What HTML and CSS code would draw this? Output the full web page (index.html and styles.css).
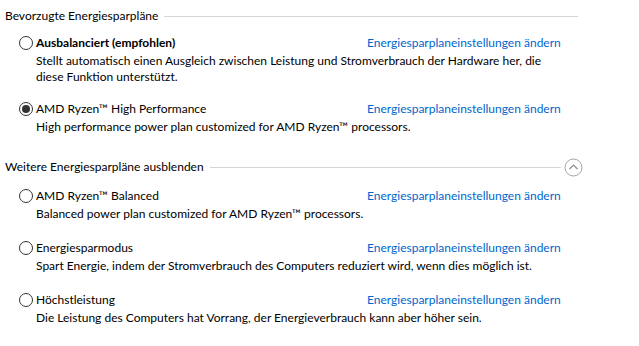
FILE: index.html
```html
<!DOCTYPE html>
<html lang="de">
<head>
<meta charset="utf-8">
<title>Energieoptionen</title>
<link rel="stylesheet" href="styles.css">
</head>
<body>
<div class="page">
  <section class="group">
    <div class="group-head">
      <span class="group-title">Bevorzugte Energiesparpläne</span>
      <span class="rule"></span>
    </div>

    <div class="plan">
      <div class="plan-row">
        <label class="plan-name bold"><span class="radio"></span>Ausbalanciert (empfohlen)</label>
        <a class="plan-link" href="#">Energiesparplaneinstellungen ändern</a>
      </div>
      <div class="plan-desc">Stellt automatisch einen Ausgleich zwischen Leistung und Stromverbrauch der Hardware her, die<br>diese Funktion unterstützt.</div>
    </div>

    <div class="plan">
      <div class="plan-row">
        <label class="plan-name"><span class="radio checked"></span>AMD Ryzen™ High Performance</label>
        <a class="plan-link" href="#">Energiesparplaneinstellungen ändern</a>
      </div>
      <div class="plan-desc">High performance power plan customized for AMD Ryzen™ processors.</div>
    </div>
  </section>

  <section class="group more">
    <div class="group-head">
      <span class="group-title">Weitere Energiesparpläne ausblenden</span>
      <span class="rule short"></span>
      <span class="collapse">
        <svg width="19" height="19" viewBox="0 0 19 19"><circle cx="9.5" cy="9.5" r="8.5" fill="none" stroke="#a3a3a3" stroke-width="1"/><path d="M5.5 11 L9.5 7 L13.5 11" fill="none" stroke="#8c8c8c" stroke-width="1.2"/></svg>
      </span>
    </div>

    <div class="plan">
      <div class="plan-row">
        <label class="plan-name"><span class="radio"></span>AMD Ryzen™ Balanced</label>
        <a class="plan-link" href="#">Energiesparplaneinstellungen ändern</a>
      </div>
      <div class="plan-desc">Balanced power plan customized for AMD Ryzen™ processors.</div>
    </div>

    <div class="plan">
      <div class="plan-row">
        <label class="plan-name"><span class="radio"></span>Energiesparmodus</label>
        <a class="plan-link" href="#">Energiesparplaneinstellungen ändern</a>
      </div>
      <div class="plan-desc">Spart Energie, indem der Stromverbrauch des Computers reduziert wird, wenn dies möglich ist.</div>
    </div>

    <div class="plan">
      <div class="plan-row">
        <label class="plan-name"><span class="radio"></span>Höchstleistung</label>
        <a class="plan-link" href="#">Energiesparplaneinstellungen ändern</a>
      </div>
      <div class="plan-desc">Die Leistung des Computers hat Vorrang, der Energieverbrauch kann aber höher sein.</div>
    </div>
  </section>
</div>
</body>
</html>
```

FILE: styles.css
```css
html, body {
  margin: 0;
  padding: 0;
  background: #ffffff;
}
body {
  font-family: Lato, "Noto Sans", sans-serif;
  font-size: 12px;
  color: #000000;
}
.page {
  width: 573px;
  padding: 8px 0 0 5px;
}
.group-head {
  display: flex;
  align-items: center;
  height: 16px;
  line-height: 16px;
}
.group.more {
  margin-top: 24px;
}
.group-title {
  white-space: nowrap;
}
.rule {
  flex: 1;
  height: 1px;
  background: #d6d6d6;
  margin-left: 6px;
}
.rule.short {
  margin-right: 3px;
}
.collapse {
  display: flex;
  width: 19px;
  height: 19px;
  margin-right: -5px;
}
.plan {
  padding-left: 14px;
  margin-top: 13px;
}
.group-head + .plan {
  margin-top: 8px;
}
.group.more .group-head + .plan {
  margin-top: 10px;
}
.group.more .plan + .plan {
  margin-top: 15px;
}
.plan-row {
  display: grid;
  grid-template-columns: 348px auto;
  height: 21px;
  line-height: 21px;
}
.plan-name {
  display: flex;
  align-items: center;
  white-space: nowrap;
}
.bold {
  font-weight: bold;
}
.radio {
  box-sizing: border-box;
  width: 14px;
  height: 14px;
  border: 1px solid #333333;
  border-radius: 50%;
  margin-right: 3px;
  display: flex;
  align-items: center;
  justify-content: center;
  flex: none;
}
.radio.checked::after {
  content: "";
  width: 8px;
  height: 8px;
  border-radius: 50%;
  background: #333333;
}
.plan-link {
  color: #0066cc;
  text-decoration: none;
  white-space: nowrap;
}
.plan-desc {
  padding-left: 17px;
  line-height: 16px;
}
```
